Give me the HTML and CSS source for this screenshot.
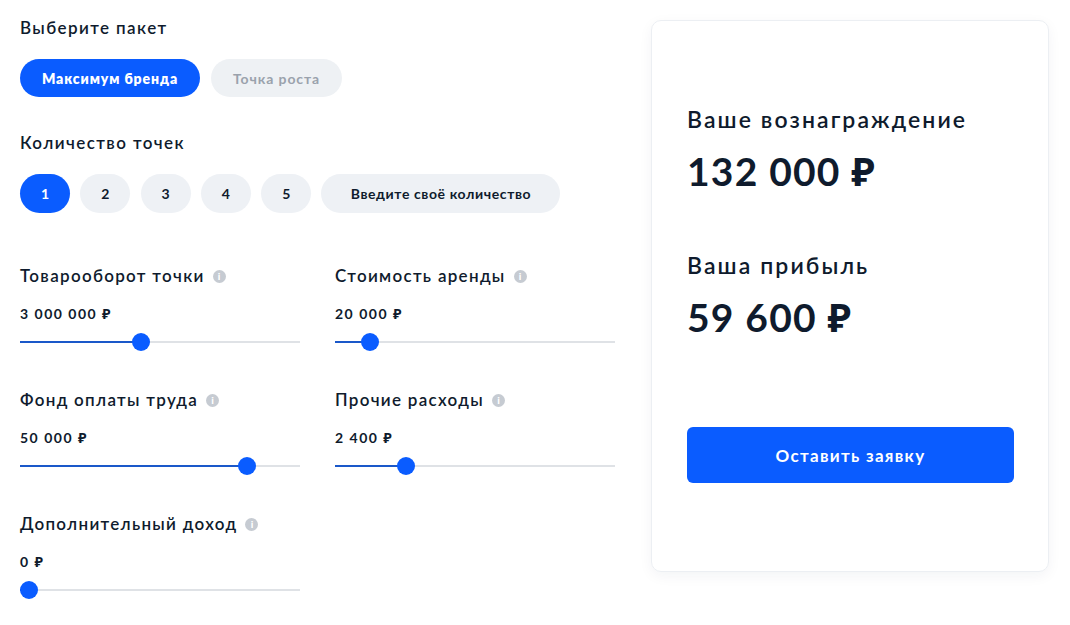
FILE: index.html
```html
<!DOCTYPE html>
<html lang="ru">
<head>
<meta charset="utf-8">
<link rel="stylesheet" href="styles.css">
</head>
<body>
<div class="page">
  <div class="left">
    <div class="title">Выберите пакет</div>
    <div class="pills">
      <button class="pill pill-active">Максимум бренда</button>
      <button class="pill pill-muted">Точка роста</button>
    </div>
    <div class="title title-2">Количество точек</div>
    <div class="counts">
      <button class="cnt cnt-active">1</button>
      <button class="cnt">2</button>
      <button class="cnt">3</button>
      <button class="cnt">4</button>
      <button class="cnt">5</button>
      <button class="cnt cnt-wide">Введите своё количество</button>
    </div>
    <div class="sliders">
      <div class="field">
        <div class="label">Товарооборот точки <span class="info">i</span></div>
        <div class="value">3 000 000 ₽</div>
        <div class="track"><div class="fill" style="width:calc((100% - 18px) * 0.427 + 9px)"></div><div class="thumb" style="left:calc((100% - 18px) * 0.427)"></div></div>
      </div>
      <div class="field">
        <div class="label">Стоимость аренды <span class="info">i</span></div>
        <div class="value">20 000 ₽</div>
        <div class="track"><div class="fill" style="width:calc((100% - 18px) * 0.099 + 9px)"></div><div class="thumb" style="left:calc((100% - 18px) * 0.099)"></div></div>
      </div>
      <div class="field">
        <div class="label">Фонд оплаты труда <span class="info">i</span></div>
        <div class="value">50 000 ₽</div>
        <div class="track"><div class="fill" style="width:calc((100% - 18px) * 0.832 + 9px)"></div><div class="thumb" style="left:calc((100% - 18px) * 0.832)"></div></div>
      </div>
      <div class="field">
        <div class="label">Прочие расходы <span class="info">i</span></div>
        <div class="value">2 400 ₽</div>
        <div class="track"><div class="fill" style="width:calc((100% - 18px) * 0.237 + 9px)"></div><div class="thumb" style="left:calc((100% - 18px) * 0.237)"></div></div>
      </div>
      <div class="field">
        <div class="label">Дополнительный доход <span class="info">i</span></div>
        <div class="value">0 ₽</div>
        <div class="track"><div class="fill" style="width:9px"></div><div class="thumb" style="left:0"></div></div>
      </div>
    </div>
  </div>
  <div class="card">
    <div class="res-label">Ваше вознаграждение</div>
    <div class="res-value">132 000 ₽</div>
    <div class="res-label res-label-2">Ваша прибыль</div>
    <div class="res-value">59 600 ₽</div>
    <button class="submit">Оставить заявку</button>
  </div>
</div>
</body>
</html>
```
FILE: styles.css
```css
* { box-sizing: border-box; }
html, body { margin: 0; padding: 0; background: #fff; }
body {
  font-family: "Lato", "Noto Sans", sans-serif;
  color: #0f1b2d;
}
.page {
  display: flex;
  padding: 19px 21px 0 20px;
  gap: 36px;
}
.left { width: 595px; }
.title {
  font-size: 17px;
  font-weight: 600;
  letter-spacing: 1.4px;
  line-height: 18px;
  height: 18px;
}
.title-2 { margin-top: 37px; }
.pills {
  display: flex;
  gap: 11px;
  margin-top: 22px;
}
button {
  font-family: inherit;
  border: none;
  cursor: pointer;
  padding: 0;
}
.pill {
  height: 38px;
  border-radius: 19px;
  font-size: 14px;
  font-weight: 800;
  letter-spacing: 0.9px;
}
.pill-active { background: #0a5cff; color: #fff; width: 180px; }
.pill-muted { background: #eef1f4; color: #9aa2ac; width: 131px; font-weight: 700; }
.counts {
  display: flex;
  gap: 10.3px;
  margin-top: 22px;
}
.cnt {
  width: 50px;
  height: 39px;
  border-radius: 20px;
  background: #eef1f5;
  color: #0f1b2d;
  font-size: 14px;
  font-weight: 700;
}
.cnt-active { background: #0a5cff; color: #fff; }
.cnt-wide { width: 239px; font-size: 14px; letter-spacing: 0.6px; }
.sliders {
  display: grid;
  grid-template-columns: 280px 280px;
  column-gap: 35px;
  row-gap: 40px;
  margin-top: 54px;
}
.label {
  font-size: 17px;
  font-weight: 600;
  letter-spacing: 1.3px;
  line-height: 18px;
  display: flex;
  align-items: center;
  gap: 8px;
}
.info {
  width: 13px;
  height: 13px;
  border-radius: 50%;
  background: #c6cbd2;
  color: #fff;
  font-size: 10px;
  font-weight: 900;
  letter-spacing: 0;
  display: inline-flex;
  align-items: center;
  justify-content: center;
  line-height: 1;
}
.value {
  margin-top: 21px;
  font-size: 14px;
  font-weight: 700;
  letter-spacing: 1.5px;
  line-height: 16px;
}
.track {
  position: relative;
  margin-top: 11px;
  height: 18px;
}
.track::before {
  content: "";
  position: absolute;
  left: 0; right: 0;
  top: 8px;
  height: 2px;
  background: #dfe2e6;
}
.fill {
  position: absolute;
  left: 0;
  top: 8px;
  height: 2px;
  background: #1a58c9;
}
.thumb {
  position: absolute;
  top: 0;
  width: 18px;
  height: 18px;
  border-radius: 50%;
  background: #0a5cff;
}
.card {
  width: 398px;
  height: 552px;
  margin-top: 1px;
  border: 1px solid #eceff3;
  border-radius: 10px;
  box-shadow: 0 4px 14px rgba(20, 40, 80, 0.05);
  padding: 84px 35px 0 35px;
  display: flex;
  flex-direction: column;
  align-items: flex-start;
}
.res-label {
  font-size: 23px;
  font-weight: 600;
  letter-spacing: 2.1px;
  line-height: 28px;
}
.res-label-2 { margin-top: 58px; }
.res-value {
  font-size: 39px;
  font-weight: 700;
  line-height: 44px;
  margin-top: 16px;
  letter-spacing: 1.2px;
}
.submit {
  margin-top: 88px;
  width: 327px;
  height: 56px;
  border-radius: 6px;
  background: #0a5cff;
  color: #fff;
  font-size: 17px;
  font-weight: 700;
  letter-spacing: 1.3px;
}
```
